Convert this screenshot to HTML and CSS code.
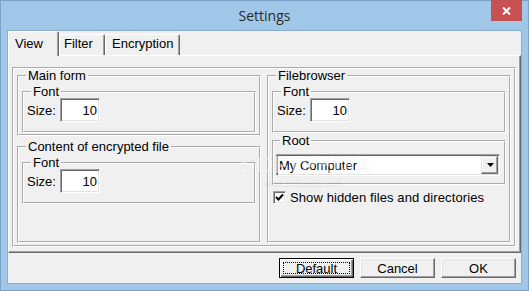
FILE: index.html
```html
<!DOCTYPE html>
<html lang="en">
<head>
  <meta charset="UTF-8" />
  <meta name="viewport" content="width=device-width, initial-scale=1.0"/>
  <title>Settings</title>
  <link rel="stylesheet" href="styles.css">
</head>
<body>
  <div class="window">
    <div class="titlebar">
      <span class="title">Settings</span>
      <span class="close-btn">
        <svg width="9" height="8" viewBox="0 0 9 8"><path d="M1 0.5 L8 7.5 M8 0.5 L1 7.5" stroke="#fff" stroke-width="2" fill="none"/></svg>
      </span>
    </div>
    <div class="client">
      <div class="tabs">
        <div class="tab tab-view active">View</div>
        <div class="tab tab-filter">Filter</div>
        <div class="tab tab-enc">Encryption</div>
      </div>
      <div class="panel">
        <div class="frame">
          <div class="col">
            <fieldset class="group main-form">
              <legend>Main form</legend>
              <fieldset class="group sub">
                <legend>Font</legend>
                <div class="size-row"><span class="lbl">Size:</span><div class="edit">10</div></div>
              </fieldset>
            </fieldset>
            <fieldset class="group content-file">
              <legend>Content of encrypted file</legend>
              <fieldset class="group sub">
                <legend>Font</legend>
                <div class="size-row"><span class="lbl">Size:</span><div class="edit">10</div></div>
              </fieldset>
            </fieldset>
          </div>
          <fieldset class="group filebrowser">
            <legend>Filebrowser</legend>
            <fieldset class="group sub">
              <legend>Font</legend>
              <div class="size-row"><span class="lbl">Size:</span><div class="edit">10</div></div>
            </fieldset>
            <fieldset class="group root">
              <legend>Root</legend>
              <div class="combo">
                <span class="combo-text">My Computer</span>
                <span class="combo-btn">
                  <svg width="7" height="4" viewBox="0 0 7 4"><path d="M0 0 H7 L3.5 4 Z" fill="#000"/></svg>
                </span>
              </div>
            </fieldset>
            <div class="check-row">
              <span class="checkbox">
                <svg width="9" height="9" viewBox="0 0 9 9"><path d="M1 4 L3.5 6.5 L8 1.5" stroke="#000" stroke-width="2" fill="none"/></svg>
              </span>
              <span class="check-label">Show hidden files and directories</span>
            </div>
          </fieldset>
        </div>
      </div>
      <div class="buttons">
        <div class="btn btn-default"><span class="focus">Default</span></div>
        <div class="btn">Cancel</div>
        <div class="btn">OK</div>
      </div>
    </div>
    <div class="watermark">SOFTPEDIA</div>
    <div class="watermark-url">www.softpedia.com</div>
  </div>
</body>
</html>
```

FILE: styles.css
```css
* {
  box-sizing: border-box;
}
body {
  margin: 0;
  font-family: "Liberation Sans", Arial, sans-serif;
  font-size: 13px;
  color: #000;
  background: #a1c7e8;
}
.window {
  position: relative;
  width: 529px;
  height: 291px;
  background: #a1c7e8;
  border: 1px solid #7ba3c8;
}
.titlebar {
  height: 30px;
  display: grid;
  grid-template-columns: 1fr auto 1fr;
}
.title {
  grid-column: 2;
  font-family: "Open Sans", "Noto Sans", sans-serif;
  font-size: 14px;
  line-height: 29px;
  color: #2a2a2a;
}
.close-btn {
  grid-column: 3;
  justify-self: end;
  width: 31px;
  height: 21px;
  margin: -1px 6px 0 0;
  background: #c75050;
  display: flex;
  align-items: center;
  justify-content: center;
}
.client {
  margin: 0 7px;
  height: 252px;
  background: #f0f0f0;
  box-shadow: 0 0 0 1px #88add0;
  display: flex;
  flex-direction: column;
}

/* tabs */
.tabs {
  display: flex;
  align-items: flex-end;
  height: 24px;
}
.tab {
  position: relative;
  height: 21px;
  padding-top: 1px;
  line-height: 15px;
  background: #f0f0f0;
  border: 1px solid;
  border-color: #fff #696969 transparent #fff;
  border-bottom: none;
  border-radius: 2px 2px 0 0;
  box-shadow: inset -1px 0 #a0a0a0;
}
.tab.active {
  z-index: 1;
  height: 25px;
  margin-bottom: -1px;
  padding-top: 4px;
}
.tab-view {
  width: 51px;
  padding-left: 6px;
}
.tab-filter {
  width: 46px;
  padding-left: 4px;
}
.tab-enc {
  width: 75px;
  padding-left: 6px;
}

.panel {
  height: 198px;
  border: 1px solid;
  border-color: #fff #696969 #696969 #fff;
  box-shadow: inset -1px -1px #a0a0a0;
  padding: 11px 4px 5px 3px;
  display: flex;
}
.frame {
  flex: 1;
  border: 2px groove #fff;
  padding: 0 3px 2px 3px;
  display: flex;
  gap: 6px;
}
.col {
  width: 244px;
  display: flex;
  flex-direction: column;
  gap: 4px;
}

/* group boxes */
.group {
  margin: 0;
  min-width: 0;
  border: 2px groove #fff;
  padding: 3px 3px 0 3px;
}
.group legend {
  padding: 0 2px;
  margin-left: 4px;
  line-height: 13px;
}
.main-form {
  padding-bottom: 1px;
}
.content-file {
  flex: 1;
}
.filebrowser {
  width: 244px;
}
.group.sub {
  padding: 0 3px 9px 3px;
}
.root {
  margin-top: 1px;
  padding: 7px 4px 7px 2px;
}

.size-row {
  display: flex;
  align-items: center;
  gap: 4px;
  height: 24px;
  line-height: 15px;
}
.edit {
  width: 40px;
  height: 24px;
  background: #fff;
  border: 1px solid;
  border-color: #a0a0a0 #fff #fff #a0a0a0;
  box-shadow: inset 1px 1px #696969, inset -1px -1px #e3e3e3;
  display: flex;
  align-items: center;
  justify-content: flex-end;
  padding-right: 2px;
}

.combo {
  height: 22px;
  background: #fff;
  border: 1px solid;
  border-color: #a0a0a0 #fff #fff #a0a0a0;
  box-shadow: inset 1px 1px #696969, inset -1px -1px #e3e3e3;
  padding: 1px;
  display: flex;
  align-items: center;
}
.combo-text {
  flex: 1;
  padding-left: 1px;
  line-height: 15px;
}
.combo-btn {
  width: 17px;
  height: 18px;
  background: #f0f0f0;
  border: 1px solid;
  border-color: #e3e3e3 #696969 #696969 #e3e3e3;
  box-shadow: inset -1px -1px #a0a0a0, inset 1px 1px #fff;
  display: flex;
  align-items: center;
  justify-content: center;
  padding-left: 1px;
}

.check-row {
  display: flex;
  align-items: center;
  gap: 4px;
  margin: 5px 0 0 1px;
  line-height: 15px;
}
.check-label {
  letter-spacing: 0.1px;
}
.checkbox {
  width: 13px;
  height: 13px;
  background: #fff;
  border: 1px solid;
  border-color: #a0a0a0 #fff #fff #a0a0a0;
  box-shadow: inset 1px 1px #696969, inset -1px -1px #e3e3e3;
  display: flex;
  align-items: center;
  justify-content: center;
}

/* bottom buttons */
.buttons {
  display: flex;
  justify-content: flex-end;
  gap: 6px;
  padding: 5px 5px 0 0;
}
.btn {
  width: 75px;
  height: 20px;
  line-height: 15px;
  border: 1px solid;
  border-color: #fff #696969 #696969 #fff;
  box-shadow: inset -1px -1px #a0a0a0, inset 1px 1px #e3e3e3;
  display: flex;
  align-items: center;
  justify-content: center;
}
.btn-default {
  border-color: #000;
  box-shadow: inset 1px 1px #fff, inset -1px -1px #696969, inset -2px -2px #a0a0a0;
  padding: 3px;
  align-items: stretch;
}
.focus {
  flex: 1;
  border: 1px dotted #000;
  display: flex;
  align-items: center;
  justify-content: center;
}

/* faint site watermark over the dialog */
.watermark {
  position: absolute;
  left: 239px;
  top: 153px;
  font-size: 23px;
  line-height: 23px;
  font-weight: bold;
  color: rgba(255, 255, 255, 0.45);
  -webkit-text-stroke: 1px rgba(0, 0, 0, 0.06);
  pointer-events: none;
}
.watermark-url {
  position: absolute;
  left: 263px;
  top: 178px;
  font-size: 9px;
  line-height: 10px;
  color: rgba(0, 0, 0, 0.1);
  pointer-events: none;
}
```
